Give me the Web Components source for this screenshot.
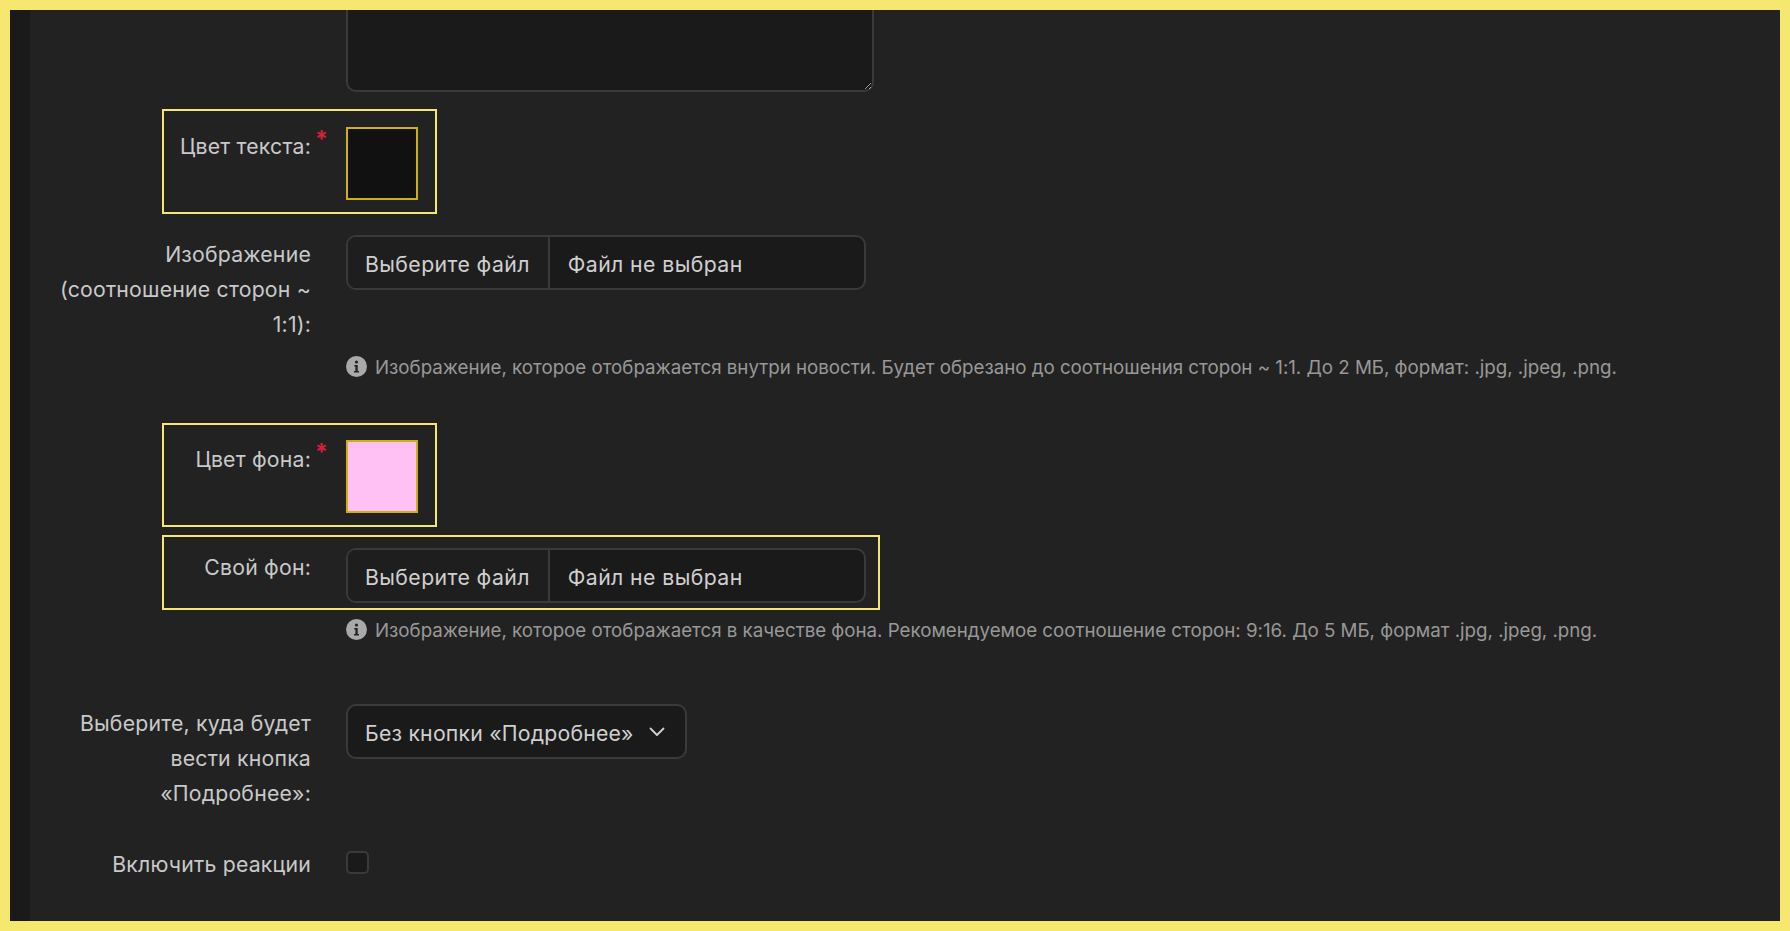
<!DOCTYPE html>
<html lang="ru">
<head>
<meta charset="utf-8">
<title>Новость</title>
<style>
    html, body { margin: 0; height: 100%; }
    body {
        background: #222;
        color: #ccc;
        font-family: 'Inter', 'Noto Sans', sans-serif;
        font-size: 21.25px;
        line-height: 35px;
        overflow: hidden;
    }
</style>
</head>
<body>
<app-frame>
    <note-textarea></note-textarea>

    <form-row boxed style="--box-pad: 16px 17px 12px 0; margin-top: 17px;" label="Цвет текста:" required>
        <colour-swatch colour="#111111"></colour-swatch>
    </form-row>

    <form-row style="margin-top: 21px;" label="Изображение (соотношение сторон ~ 1:1):">
        <file-picker></file-picker>
    </form-row>
    <hint-note style="margin-top: 13px;">Изображение, которое отображается внутри новости. Будет обрезано до соотношения сторон ~ 1:1. До 2 МБ, формат: .jpg, .jpeg, .png.</hint-note>

    <form-row boxed style="--box-pad: 15px 17px 12px 0; margin-top: 46px;" label="Цвет фона:" required>
        <colour-swatch colour="#ffc0f3"></colour-swatch>
    </form-row>

    <form-row boxed style="--box-pad: 11px 12px 5px 0; margin-top: 8px;" label="Свой фон:">
        <file-picker></file-picker>
    </form-row>
    <hint-note style="margin-top: 8px;">Изображение, которое отображается в качестве фона. Рекомендуемое соотношение сторон: 9:16. До 5 МБ, формат .jpg, .jpeg, .png.</hint-note>

    <form-row style="margin-top: 64px;" label="Выберите, куда будет вести кнопка «Подробнее»:">
        <select-box>Без кнопки «Подробнее»</select-box>
    </form-row>

    <form-row style="margin-top: 34px;" label="Включить реакции">
        <check-box></check-box>
    </form-row>
</app-frame>

<script>
class AppFrame extends HTMLElement {
    constructor() {
        super();
        this.attachShadow({ mode: 'open' });
        this.shadowRoot.innerHTML = `
            <style>
                :host {
                    display: flex;
                    box-sizing: border-box;
                    height: 931px;
                    border: 10px solid #f6e76f;
                    background: #222;
                    overflow: hidden;
                }
                .side { width: 20px; flex: none; background: #1a1a1a; }
                .content { flex: 1; min-width: 0; }
            </style>
            <div class="side"></div>
            <div class="content"><slot></slot></div>
        `;
    }
}

class FormRow extends HTMLElement {
    constructor() {
        super();
        this.attachShadow({ mode: 'open' });
        this.shadowRoot.innerHTML = `
            <style>
                :host { display: flex; align-items: flex-start; }
                :host([boxed]) {
                    width: fit-content;
                    margin-left: 132px;
                    border: 2px solid #f6e76f;
                    padding: var(--box-pad);
                }
                .label {
                    position: relative;
                    box-sizing: border-box;
                    flex: none;
                    width: 316px;
                    padding: 2px 35px 0 25px;
                    text-align: right;
                    color: #c9c9c9;
                    letter-spacing: .2px;
                }
                :host([boxed]) .label { width: 182px; padding-left: 0; }
                .star {
                    position: absolute;
                    top: -5px;
                    right: 18px;
                    color: #d4213c;
                    font-size: 23px;
                    font-weight: 700;
                    line-height: 35px;
                }
            </style>
            <div class="label"><span id="text"></span><span class="star" hidden>*</span></div>
            <slot></slot>
        `;
        this.shadowRoot.querySelector('#text').innerText = this.getAttribute('label');
        this.shadowRoot.querySelector('.star').hidden = !this.hasAttribute('required');
    }
}

class NoteTextarea extends HTMLElement {
    constructor() {
        super();
        this.attachShadow({ mode: 'open' });
        this.shadowRoot.innerHTML = `
            <style>
                :host { display: block; margin-left: 316px; height: 82px; }
                textarea {
                    display: block;
                    box-sizing: border-box;
                    width: 528px;
                    height: 82px;
                    margin: 0;
                    color-scheme: dark;
                    background: #1a1a1a;
                    border: 2px solid #3a3a3a;
                    border-top: 0;
                    border-radius: 0 0 10px 10px;
                    outline: 0;
                    resize: vertical;
                }
            </style>
            <textarea></textarea>
        `;
    }
}

class ColourSwatch extends HTMLElement {
    constructor() {
        super();
        this.attachShadow({ mode: 'open' });
        this.shadowRoot.innerHTML = `
            <style>
                :host {
                    display: block;
                    box-sizing: border-box;
                    width: 72px;
                    height: 73px;
                    border: 2px solid #cdb015;
                }
            </style>
        `;
        this.style.background = this.getAttribute('colour');
    }
}

class FilePicker extends HTMLElement {
    constructor() {
        super();
        this.attachShadow({ mode: 'open' });
        this.shadowRoot.innerHTML = `
            <style>
                :host {
                    display: flex;
                    box-sizing: border-box;
                    width: 520px;
                    height: 55px;
                    background: #1a1a1a;
                    border: 2px solid #3a3a3a;
                    border-radius: 10px;
                    color: #d0d0d0;
                    line-height: 51px;
                    letter-spacing: .4px;
                }
                .btn { padding: 2px 18px 0 17px; border-right: 2px solid #3a3a3a; background: #1e1e1e; border-radius: 8px 0 0 8px; }
                .name { padding: 2px 18px 0 18px; }
            </style>
            <div class="btn">Выберите файл</div>
            <div class="name">Файл не выбран</div>
        `;
    }
}

class HintNote extends HTMLElement {
    constructor() {
        super();
        this.attachShadow({ mode: 'open' });
        this.shadowRoot.innerHTML = `
            <style>
                :host {
                    display: flex;
                    align-items: center;
                    gap: 8px;
                    margin-left: 316px;
                    height: 22px;
                    font-size: 18.75px;
                    line-height: 22px;
                    letter-spacing: -.025px;
                    color: #989898;
                    white-space: nowrap;
                }
                svg { flex: none; display: block; }
                span { padding-top: 3px; }
            </style>
            <svg width="21" height="21" viewBox="0 0 21 21">
                <circle cx="10.5" cy="10.5" r="10.5" fill="#a9a9a9"/>
                <circle cx="10.5" cy="6" r="1.6" fill="#222"/>
                <path d="M8.3 9h3.4v6h1.3v1.5H8v-1.5h1.4V10.4H8.3z" fill="#222"/>
            </svg>
            <span><slot></slot></span>
        `;
    }
}

class SelectBox extends HTMLElement {
    constructor() {
        super();
        this.attachShadow({ mode: 'open' });
        this.shadowRoot.innerHTML = `
            <style>
                :host {
                    display: flex;
                    align-items: center;
                    box-sizing: border-box;
                    width: 341px;
                    height: 55px;
                    padding: 0 20px 0 17px;
                    background: #1a1a1a;
                    border: 2px solid #3a3a3a;
                    border-radius: 10px;
                    color: #d0d0d0;
                    letter-spacing: .2px;
                }
                span { flex: 1; padding-top: 3px; white-space: nowrap; }
                svg { flex: none; display: block; }
            </style>
            <span><slot></slot></span>
            <svg width="16" height="16" viewBox="0 0 16 16" fill="none" stroke="#d0d0d0" stroke-width="1.8" stroke-linecap="round" stroke-linejoin="round">
                <path d="M1.5 4.5l6.5 6.5 6.5-6.5"/>
            </svg>
        `;
    }
}

class CheckBox extends HTMLElement {
    constructor() {
        super();
        this.attachShadow({ mode: 'open' });
        this.shadowRoot.innerHTML = `
            <style>
                :host {
                    display: block;
                    box-sizing: border-box;
                    width: 23px;
                    height: 23px;
                    margin-top: 6px;
                    background: #1a1a1a;
                    border: 2px solid #3a3a3a;
                    border-radius: 5px;
                }
            </style>
        `;
    }
}

customElements.define('app-frame', AppFrame);
customElements.define('form-row', FormRow);
customElements.define('note-textarea', NoteTextarea);
customElements.define('colour-swatch', ColourSwatch);
customElements.define('file-picker', FilePicker);
customElements.define('hint-note', HintNote);
customElements.define('select-box', SelectBox);
customElements.define('check-box', CheckBox);
</script>
</body>
</html>
